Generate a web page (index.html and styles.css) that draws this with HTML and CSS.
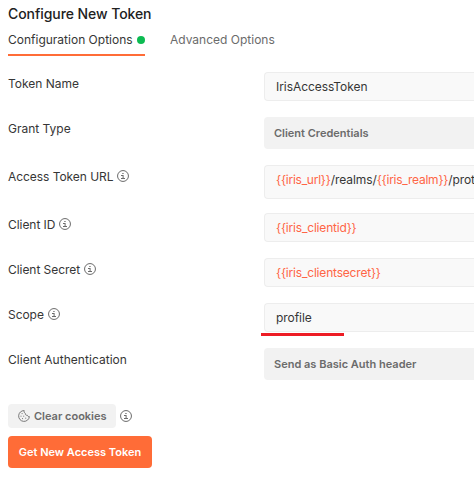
FILE: index.html
```html
<!DOCTYPE html>
<html lang="en">
<head>
<meta charset="utf-8">
<title>Configure New Token</title>
<link rel="stylesheet" href="styles.css">
</head>
<body>
<svg class="defs" width="0" height="0">
  <symbol id="info" viewBox="0 0 12 12">
    <circle cx="6" cy="6" r="5.45" fill="none" stroke="currentColor"/>
    <path d="M5.3 3h1.3v1.1H5.3zM4 5h2.6v3H8v1H4V8h1.6V6H4z" fill="currentColor"/>
  </symbol>
</svg>
<main class="panel">
  <h1 class="title">Configure New Token</h1>
  <nav class="tabs">
    <a class="tab active"><span>Configuration Options</span><i class="dot"></i></a>
    <a class="tab"><span>Advanced Options</span></a>
  </nav>
  <form class="form">
    <div class="row"><label>Token Name</label><div class="input">IrisAccessToken</div></div>
    <div class="row"><label>Grant Type</label><div class="select">Client Credentials</div></div>
    <div class="row url"><label class="tight">Access Token URL<svg class="info"><use href="#info"/></svg></label><div class="input tall"><b>{{iris_url}}</b>/realms/<b>{{iris_realm}}</b>/prot</div></div>
    <div class="row"><label class="tight">Client ID<svg class="info"><use href="#info"/></svg></label><div class="input"><b>{{iris_clientid}}</b></div></div>
    <div class="row"><label class="tight">Client Secret<svg class="info"><use href="#info"/></svg></label><div class="input"><b>{{iris_clientsecret}}</b></div></div>
    <div class="row marked"><label class="tight">Scope<svg class="info"><use href="#info"/></svg></label><div class="input">profile</div></div>
    <div class="row"><label class="wide">Client Authentication</label><div class="select">Send as Basic Auth header</div></div>
  </form>
  <div class="cookies">
    <button class="clear" type="button">
      <svg class="cookie" viewBox="0 0 12 12" fill="none" stroke="currentColor">
        <path d="M6.2.6A5.4 5.4 0 1 0 11.4 6.6C10.4 6.8 9.6 6.3 9.4 5.3 8.1 5.5 7.1 4.6 7.3 3.4 6.4 2.9 5.9 1.9 6.2.6Z"/>
        <path d="M3.6 3.6h1M2.5 6.2h1M5.2 6.2h1M4 8.6h1M7.2 8.2h1"/>
      </svg>Clear cookies</button>
    <svg class="info"><use href="#info"/></svg>
  </div>
  <button class="primary" type="button">Get New Access Token</button>
</main>
</body>
</html>
```

FILE: styles.css
```css
* { box-sizing: border-box; }
body {
  margin: 0;
  background: #fff;
  color: #363636;
  font: 12px/16px Inter, "Liberation Sans", sans-serif;
  overflow: hidden;
}
.defs { position: absolute; }
.panel { padding: 4px 0 0 8px; }
.title {
  margin: 0;
  font-size: 14px;
  line-height: 20px;
  font-weight: 500;
  letter-spacing: -.07px;
  color: #212121;
}
.tabs { display: flex; gap: 25px; height: 32px; }
.tab {
  display: flex;
  align-items: center;
  height: 32px;
  color: #6b6b6b;
}
.tab.active {
  width: 137px;
  justify-content: space-between;
  padding-top: 2px;
  color: #363636;
  border-bottom: 2px solid #ff6c37;
}
.dot {
  width: 8px;
  height: 8px;
  border-radius: 50%;
  background: #0cbb52;
}
.form {
  display: flex;
  flex-direction: column;
  gap: 16px;
  margin-top: 16px;
}
.row {
  position: relative;
  display: grid;
  grid-template-columns: 256px 1fr;
  align-items: start;
}
.url { margin-bottom: -2px; }
label { display: flex; align-items: center; height: 24px; }
.tight { letter-spacing: -.05px; }
.wide { letter-spacing: .04px; }
.info { width: 12px; height: 12px; color: #6b6b6b; }
label .info { margin: 0 0 2px 4px; }
.input {
  height: 29px;
  padding: 0 0 0 11px;
  border: 1px solid #ededed;
  border-right: 0;
  border-radius: 4px 0 0 4px;
  background: #f9f9f9;
  line-height: 27px;
  letter-spacing: -.06px;
  color: #363636;
  white-space: nowrap;
  overflow: hidden;
}
.tall { height: 34px; }
.input b { font-weight: 400; letter-spacing: -.19px; color: #ff6546; }
.tall b { letter-spacing: -.24px; }
.select {
  height: 32px;
  padding-left: 10px;
  border-radius: 4px 0 0 4px;
  background: #f2f2f2;
  font-size: 11px;
  line-height: 32px;
  font-weight: 600;
  color: #6b6b6b;
}
.marked::after {
  content: "";
  position: absolute;
  left: 253px;
  top: 30px;
  width: 83px;
  height: 3px;
  background: #ed1c24;
}
.cookies { display: flex; align-items: center; margin-top: 24px; }
.cookies .info { margin-left: 4px; }
button {
  display: flex;
  align-items: center;
  border: 0;
  border-radius: 4px;
  font: 600 11px/16px Inter, "Liberation Sans", sans-serif;
  white-space: nowrap;
}
.clear {
  width: 108px;
  height: 24px;
  padding: 0 0 0 10px;
  background: #f2f2f2;
  color: #6b6b6b;
}
.cookie { width: 12px; height: 12px; margin-right: 4px; stroke-width: .9; }
.primary {
  width: 144px;
  height: 32px;
  margin-top: 8px;
  padding: 0;
  justify-content: center;
  background: #ff6c37;
  color: #fff;
}
```
